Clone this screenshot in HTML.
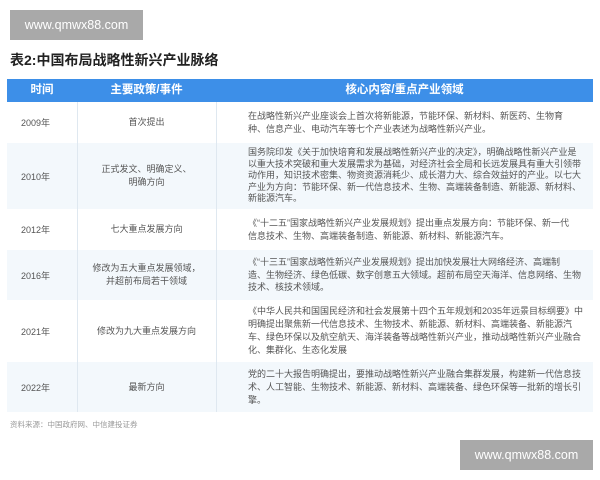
<!DOCTYPE html>
<html><head><meta charset="utf-8"><style>
*{margin:0;padding:0;box-sizing:border-box}
body{width:600px;height:480px;background:#fff;font-family:"Liberation Sans","Noto Sans CJK SC",sans-serif;position:relative;overflow:hidden;color:#444}
.wm{position:absolute;background:#a9a9a9;color:#fff;font-size:12.5px;display:flex;align-items:center;justify-content:center}
.title{position:absolute;left:10px;top:50px;font-size:14px;font-weight:bold;color:#222}
.hdr{position:absolute;left:7px;top:79px;width:586px;height:23px;background:#3d8fe8;color:#fff;font-weight:bold;font-size:11.5px}
.hdr div{position:absolute;top:0;height:23px;line-height:23px;text-align:center}
.row{position:absolute;left:7px;width:586px;font-size:9px;color:#555}
.alt{background:#f3f8fc}
.c1{position:absolute;left:14px;top:0;height:100%;display:flex;align-items:center}
.c2{position:absolute;left:70px;width:139px;top:0;height:100%;display:flex;align-items:center;justify-content:center;text-align:center;line-height:13px}
.c3{position:absolute;left:241px;width:340px;top:0;height:100%;display:flex;align-items:center;line-height:12.5px}
.vl{position:absolute;top:79px;height:333px;width:1px;background:#dfe8f0}
</style></head><body>
<div class="wm" style="left:10px;top:10px;width:133px;height:30px">www.qmwx88.com</div>
<div class="title">表2:中国布局战略性新兴产业脉络</div>
<div class="row" style="top:102px;height:41px"><div class="c1">2009年</div><div class="c2">首次提出</div><div class="c3"><div>在战略性新兴产业座谈会上首次将新能源，节能环保、新材料、新医药、生物育<br>种、信息产业、电动汽车等七个产业表述为战略性新兴产业。</div></div></div>
<div class="row alt" style="top:143px;height:66px"><div class="c1">2010年</div><div class="c2">正式发文、明确定义、<br>明确方向</div><div class="c3" style="line-height:11.5px"><div>国务院印发《关于加快培育和发展战略性新兴产业的决定》，明确战略性新兴产业是<br>以重大技术突破和重大发展需求为基础，对经济社会全局和长远发展具有重大引领带<br>动作用，知识技术密集、物资资源消耗少、成长潜力大、综合效益好的产业。以七大<br>产业为方向：节能环保、新一代信息技术、生物、高端装备制造、新能源、新材料、<br>新能源汽车。</div></div></div>
<div class="row" style="top:209px;height:41px"><div class="c1">2012年</div><div class="c2">七大重点发展方向</div><div class="c3"><div>《“十二五”国家战略性新兴产业发展规划》提出重点发展方向：节能环保、新一代<br>信息技术、生物、高端装备制造、新能源、新材料、新能源汽车。</div></div></div>
<div class="row alt" style="top:250px;height:50px"><div class="c1">2016年</div><div class="c2">修改为五大重点发展领域，<br>并超前布局若干领域</div><div class="c3"><div>《“十三五”国家战略性新兴产业发展规划》提出加快发展壮大网络经济、高端制<br>造、生物经济、绿色低碳、数字创意五大领域。超前布局空天海洋、信息网络、生物<br>技术、核技术领域。</div></div></div>
<div class="row" style="top:300px;height:62px"><div class="c1">2021年</div><div class="c2">修改为九大重点发展方向</div><div class="c3" style="line-height:13px"><div>《中华人民共和国国民经济和社会发展第十四个五年规划和2035年远景目标纲要》中<br>明确提出聚焦新一代信息技术、生物技术、新能源、新材料、高端装备、新能源汽<br>车、绿色环保以及航空航天、海洋装备等战略性新兴产业，推动战略性新兴产业融合<br>化、集群化、生态化发展</div></div></div>
<div class="row alt" style="top:362px;height:50px"><div class="c1">2022年</div><div class="c2">最新方向</div><div class="c3" style="line-height:13px"><div>党的二十大报告明确提出，要推动战略性新兴产业融合集群发展，构建新一代信息技<br>术、人工智能、生物技术、新能源、新材料、高端装备、绿色环保等一批新的增长引<br>擎。</div></div></div>
<div class="vl" style="left:77px"></div><div class="vl" style="left:216px"></div>
<div class="hdr"><div style="left:0;width:70px">时间</div><div style="left:70px;width:139px">主要政策/事件</div><div style="left:209px;width:377px">核心内容/重点产业领域</div></div>
<div style="position:absolute;left:10px;top:419px;font-size:7.5px;color:#999">资料来源：中国政府网、中信建投证券</div>
<div class="wm" style="left:460px;top:440px;width:133px;height:30px">www.qmwx88.com</div>
</body></html>
